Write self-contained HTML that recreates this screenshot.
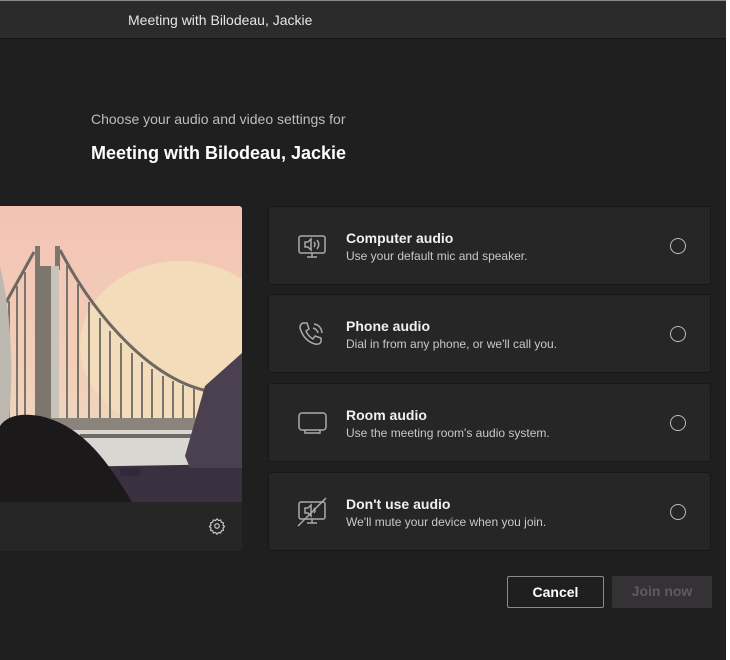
<!DOCTYPE html>
<html><head><style>
*{margin:0;padding:0;box-sizing:border-box}
body{width:730px;height:660px;background:#fff;font-family:"Liberation Sans",sans-serif;position:relative;overflow:hidden}
#app{position:absolute;left:0;top:0;width:726px;height:660px;background:#1f1f1f}
#title{position:absolute;left:0;top:0;width:726px;height:39px;background:#2b2b2b;border-top:1px solid #8a8a8a;border-bottom:1px solid #161616}
#title span{position:absolute;left:128px;top:11px;color:#e6e6e6;font-size:14px}
.sub{position:absolute;left:91px;top:111px;color:#bdbdbd;font-size:14px}
.h{position:absolute;left:91px;top:143px;color:#fff;font-size:18px;font-weight:bold}
.card{position:absolute;left:268px;width:443px;height:79px;background:#262626;border:1px solid #171717;border-radius:3px}
.card .t{position:absolute;left:77px;top:23px;color:#f0f0f0;font-size:14px;font-weight:bold}
.card .d{position:absolute;left:77px;top:42px;color:#c8c8c8;font-size:12px}
.card .r{position:absolute;left:401px;top:31px;width:16px;height:16px;border:1.5px solid #bbb;border-radius:50%}
.card svg{position:absolute;left:28px;top:24px}
#vid{position:absolute;left:0;top:206px;width:242px;height:345px;background:#262626;border-radius:0 3px 3px 0;overflow:hidden}
.btn{position:absolute;top:576px;height:32px;font-size:14px;font-weight:bold;text-align:center;line-height:31px;border-radius:2px}
</style></head><body>
<div id="app">
<div id="title"><span>Meeting with Bilodeau, Jackie</span></div>
<div class="sub">Choose your audio and video settings for</div>
<div class="h">Meeting with Bilodeau, Jackie</div>

<div id="vid">
<svg width="242" height="296" viewBox="0 0 242 296">
<defs><linearGradient id="sky" x1="0" y1="0" x2="0" y2="1"><stop offset="0" stop-color="#f3c3b4"/><stop offset="0.6" stop-color="#f2d0b8"/><stop offset="1" stop-color="#ede0cc"/></linearGradient></defs>
<rect width="242" height="296" fill="url(#sky)"/>
<ellipse cx="180" cy="140" rx="100" ry="85" fill="#f3dcba"/>
<rect x="0" y="214" width="242" height="50" fill="#d9d7d2"/>
<path d="M60 44 C100 120 160 180 215 186" stroke="#6d6862" stroke-width="3" fill="none"/>
<path d="M34 46 L4 100" stroke="#6d6862" stroke-width="3"/>
<g stroke="#7a746c" stroke-width="2">
<line x1="67" y1="58" x2="67" y2="214"/><line x1="78" y1="78" x2="78" y2="214"/><line x1="89" y1="96" x2="89" y2="214"/><line x1="100" y1="112" x2="100" y2="214"/><line x1="110" y1="125" x2="110" y2="214"/><line x1="121" y1="137" x2="121" y2="214"/><line x1="132" y1="147" x2="132" y2="214"/><line x1="142" y1="156" x2="142" y2="214"/><line x1="152" y1="163" x2="152" y2="214"/><line x1="163" y1="170" x2="163" y2="214"/><line x1="173" y1="175" x2="173" y2="214"/><line x1="183" y1="179" x2="183" y2="214"/><line x1="194" y1="182" x2="194" y2="214"/><line x1="204" y1="184" x2="204" y2="214"/>
<line x1="9" y1="95" x2="9" y2="214"/><line x1="17" y1="80" x2="17" y2="214"/><line x1="25" y1="66" x2="25" y2="214"/>
</g>
<rect x="35" y="60" width="24" height="165" fill="#7c766e"/>
<rect x="35" y="40" width="5" height="24" fill="#7c766e"/><rect x="55" y="40" width="5" height="24" fill="#7c766e"/>
<rect x="51" y="60" width="8" height="165" fill="#c9c4ba"/>
<rect x="0" y="212" width="200" height="12" fill="#8a847c"/>
<rect x="80" y="228" width="125" height="4" fill="#6f6a66"/>
<path d="M0 262 L242 258 L242 296 L0 296Z" fill="#3a3040"/>
<path d="M242 147 L205 180 L185 250 L190 262 L242 262Z" fill="#4a4050"/>
<rect x="120" y="262" width="20" height="8" rx="3" fill="#2f2a38"/>
<path d="M0 60 C12 110 14 170 8 225 L0 225Z" fill="#bdb8b0"/>
<path d="M0 220 Q10 205 40 210 C85 220 110 260 132 296 L0 296Z" fill="#1c191b"/>
</svg>
<svg style="position:absolute;left:208px;top:311px" width="18" height="18" viewBox="0 0 24 24" fill="none" stroke="#c8c8c8" stroke-width="1.6"><path d="M12 2.5l2 2.2 2.9-.6.9 2.8 2.8.9-.6 2.9 2 2-2 2 .6 2.9-2.8.9-.9 2.8-2.9-.6-2 2.2-2-2.2-2.9.6-.9-2.8-2.8-.9.6-2.9-2-2 2-2-.6-2.9 2.8-.9.9-2.8 2.9.6z"/><circle cx="12" cy="12" r="3"/></svg>
</div>

<div class="card" style="top:206px">
<svg width="30" height="30" viewBox="0 0 30 30" fill="none" stroke="#aaa" stroke-width="1.5"><rect x="2" y="5" width="26" height="17" rx="2"/><path d="M10 26h10M15 22v4"/><path d="M8 11h3l3-3v11l-3-3H8z"/><path d="M17 11q2 2.5 0 5M20 9q3.5 4.5 0 9"/></svg>
<div class="t">Computer audio</div><div class="d">Use your default mic and speaker.</div><div class="r"></div></div>
<div class="card" style="top:294px">
<svg width="30" height="30" viewBox="0 0 30 30" fill="none" stroke="#aaa" stroke-width="1.5"><path d="M6 4l4 0 2 6-3 2q2 5 7 8l2-3 6 2v4q-2 3-6 2Q7 22 3 9 3 5 6 4z"/><path d="M16 9q4 1 5 5M17 5q7 1 8 9"/></svg>
<div class="t">Phone audio</div><div class="d">Dial in from any phone, or we'll call you.</div><div class="r"></div></div>
<div class="card" style="top:383px">
<svg width="30" height="30" viewBox="0 0 30 30" fill="none" stroke="#aaa" stroke-width="1.5"><rect x="2" y="5" width="27" height="17" rx="3"/><path d="M8 22v3h15v-3"/></svg>
<div class="t">Room audio</div><div class="d">Use the meeting room's audio system.</div><div class="r"></div></div>
<div class="card" style="top:472px">
<svg width="30" height="30" viewBox="0 0 30 30" fill="none" stroke="#aaa" stroke-width="1.5"><rect x="2" y="5" width="26" height="17" rx="2"/><path d="M10 26h10M15 22v4"/><path d="M8 11h3l3-3v11l-3-3H8z"/><path d="M17 11q2 2.5 0 5"/><path d="M1 29L29 1"/></svg>
<div class="t">Don't use audio</div><div class="d">We'll mute your device when you join.</div><div class="r"></div></div>

<div class="btn" style="left:507px;width:97px;border:1px solid #8a8a8a;color:#fff;background:#1f1f1f">Cancel</div>
<div class="btn" style="left:612px;width:100px;background:#353235;color:#5f5a5e">Join now</div>
</div>
</body></html>
